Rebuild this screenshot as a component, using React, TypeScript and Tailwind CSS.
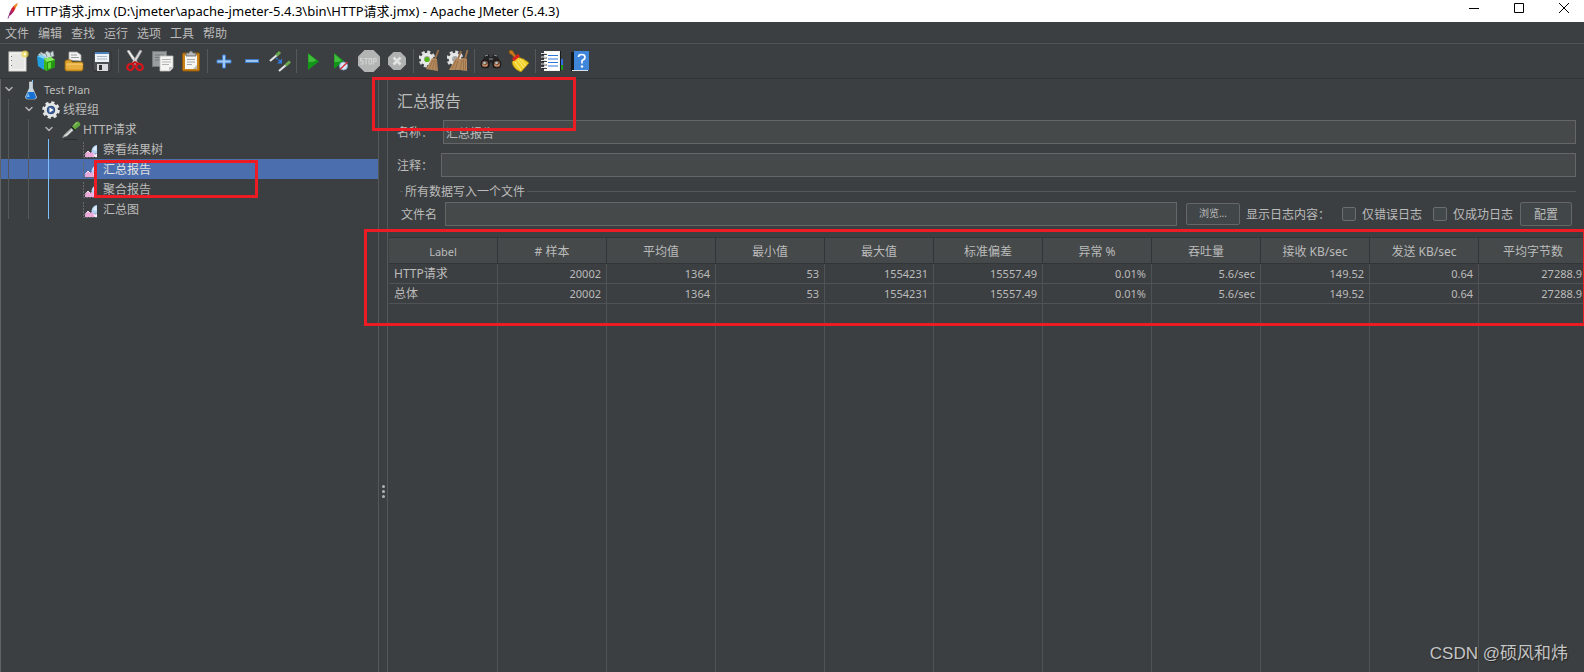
import type { ReactNode } from 'react'
import { ChevronDown } from 'lucide-react'
import { clsx } from 'clsx'

const MENUS = ['文件', '编辑', '查找', '运行', '选项', '工具', '帮助']

const COLUMNS = [
  'Label',
  '# 样本',
  '平均值',
  '最小值',
  '最大值',
  '标准偏差',
  '异常 %',
  '吞吐量',
  '接收 KB/sec',
  '发送 KB/sec',
  '平均字节数',
]

const ROWS = [
  ['HTTP请求', '20002', '1364', '53', '1554231', '15557.49', '0.01%', '5.6/sec', '149.52', '0.64', '27288.9'],
  ['总体', '20002', '1364', '53', '1554231', '15557.49', '0.01%', '5.6/sec', '149.52', '0.64', '27288.9'],
]

function Icon({ children, className }: { children: ReactNode; className?: string }) {
  return (
    <svg viewBox="0 0 22 22" className={clsx('size-[22px] shrink-0', className)} aria-hidden="true">
      {children}
    </svg>
  )
}

function FeatherIcon() {
  return (
    <svg viewBox="0 0 12 16" className="h-4 w-3 shrink-0" aria-hidden="true">
      <path d="M1 15.500 3 10" stroke="#8a3b8f" strokeWidth="1" />
      <path d="M2 13 Q2 9 5 5 L7 7 Q6 11 2 13" fill="#a3246e" />
      <path d="M4.500 6 Q6 3 8 2 L8.500 5 Q7.500 8 5.500 9.500Z" fill="#d3202c" />
      <path d="M7 3 Q9 0 11 0 Q10 3 8 6Z" fill="#f08a24" />
    </svg>
  )
}

function NewIcon() {
  return (
    <Icon>
      <rect x="2" y="2" width="17" height="19" fill="#f2f2f0" stroke="#d5d5d2" />
      <rect x="4" y="4" width="13" height="15" fill="#e6e6e5" />
      <path d="M4.500 6v1M4.500 10v1M4.500 15v1" stroke="#777" />
      <circle cx="18" cy="4" r="3.600" fill="#efd84a" opacity="0.75" />
      <circle cx="18" cy="4" r="1.500" fill="#fffbd0" />
    </Icon>
  )
}

function TemplatesIcon() {
  return (
    <Icon>
      <path d="M3 5 6 2l3 2 3-3 3 2 3-2 1 5-8 3Z" fill="#cfdadd" stroke="#7f9297" strokeWidth="0.7" />
      <path d="M5 3l3 4M10 2l2 5M15 2l1 4" stroke="#66777b" strokeWidth="0.8" />
      <path d="M2 6l7 2v12l-6-4Z" fill="#1f9fe0" />
      <path d="M2 6l5-1 4 2-2 2Z" fill="#7fd3fa" />
      <path d="M9 9l7-2 4 3v7l-9 4-2-2Z" fill="#3db81c" />
      <path d="M9 9l7-2 4 3-8 2Z" fill="#86e85c" />
      <path d="M12 12v9l8-4v-7Z" fill="#259611" />
      <path d="M13 13l3-1v6l-3 1Z" fill="#62d83d" />
    </Icon>
  )
}

function OpenIcon() {
  return (
    <Icon>
      <path d="M6 10V2h8l4 3v6Z" fill="#f4f4f4" stroke="#a9a9a9" strokeWidth="0.8" />
      <path d="M8 5h6M8 7.500h8" stroke="#999" />
      <path d="M2 12q0-2 2-2h4l1 2h10q1 0 1 2v5q0 2-2 2H4q-2 0-2-2Z" fill="#dda22c" stroke="#9b680d" strokeWidth="0.8" />
      <path d="M3 14h17l-1 5H4Z" fill="#e8b040" />
      <path d="M3.500 14h16" stroke="#ffdf8b" strokeWidth="0.8" />
    </Icon>
  )
}

function SaveIcon() {
  return (
    <Icon>
      <path d="M2 4q0-2 2-2h14q2 0 2 2v15q0 2-2 2H4q-2 0-2-2Z" fill="#4d5052" stroke="#2f3132" />
      <rect x="4" y="2" width="14" height="10" fill="#eef3f7" />
      <path d="M4 3h14" stroke="#4b84bd" strokeWidth="2" />
      <path d="M6 6.500h10M6 9h10" stroke="#a9b8c4" />
      <rect x="6" y="14" width="11" height="7" fill="#d9dbdc" />
      <rect x="8" y="15" width="3" height="5" fill="#303233" />
    </Icon>
  )
}

function CutIcon() {
  return (
    <Icon>
      <path d="M3 1 5 0l9 13-2 2Z" fill="#f1f1f1" stroke="#999" strokeWidth="0.6" />
      <path d="M18 1 16 0 8 13l2 2Z" fill="#d7d7d7" stroke="#999" strokeWidth="0.6" />
      <ellipse cx="6.500" cy="17" rx="3.400" ry="3" fill="none" stroke="#d9151c" strokeWidth="2.200" transform="rotate(-35 6.500 17)" />
      <ellipse cx="15.500" cy="17" rx="3.400" ry="3" fill="none" stroke="#d9151c" strokeWidth="2.200" transform="rotate(35 15.500 17)" />
      <path d="M8 14l3-2 3 2" fill="none" stroke="#c1080f" strokeWidth="1.800" />
    </Icon>
  )
}

function CopyIcon() {
  return (
    <Icon>
      <rect x="0.500" y="1.500" width="14" height="15" fill="#9a9d9e" stroke="#74787a" />
      <path d="M3 5h9M3 7.500h9M3 10h9" stroke="#777b7d" />
      <path d="M8 6h13v12l-3 3H8Z" fill="#f5f5f4" stroke="#bdbdbb" strokeWidth="0.8" />
      <path d="M10 9.500h9M10 12h9M10 14.500h7" stroke="#b4b4b4" />
      <path d="M21 17h-4v4Z" fill="#c2c2c0" />
    </Icon>
  )
}

function PasteIcon() {
  return (
    <Icon>
      <rect x="2.500" y="3" width="17" height="18" rx="1" fill="#c98217" stroke="#8d560a" />
      <path d="M5 5h12v14H5Z" fill="#f6f6f5" />
      <path d="M7 9.500h8M7 12h8M7 14.500h5" stroke="#a8a8a8" />
      <path d="M17 15l-4 4h4Z" fill="#b9b9b7" />
      <path d="M6 6V3h3q0-2 2-2t2 2h3v3Z" fill="#b5b7b8" stroke="#5e6061" strokeWidth="0.8" />
    </Icon>
  )
}

function PlusIcon() {
  return (
    <Icon>
      <path d="M9.500 5h3v5H18v3h-5.500v5h-3v-5H4v-3h5.500Z" fill="#9fcaf5" stroke="#3f7cc8" />
    </Icon>
  )
}

function MinusIcon() {
  return (
    <Icon>
      <rect x="4.500" y="9.500" width="13" height="3" fill="#9fc4ee" stroke="#3f7cc8" />
    </Icon>
  )
}

function ToggleIcon() {
  return (
    <Icon>
      <path d="M1 11 8 5" stroke="#dfe2e0" strokeWidth="2.200" />
      <path d="M7.500 5.500 11 2" stroke="#6cab4e" strokeWidth="3" />
      <path d="M10 21l7-6" stroke="#dfe2e0" strokeWidth="2.200" />
      <path d="M16.500 15.500 21 11.500" stroke="#6cab4e" strokeWidth="3" />
      <path d="M7 8l4 3" stroke="#2f7be0" strokeWidth="1.400" strokeDasharray="2 1" />
      <path d="M13 8.500v5h-5Z" fill="#2f7be0" />
    </Icon>
  )
}

function PlayIcon() {
  return (
    <Icon>
      <path d="M6 3v17l11-8.500Z" fill="#13951a" />
      <path d="M6.500 4v8q5 0 8-1.500Z" fill="#43bd3c" />
    </Icon>
  )
}

function PlayNoTimersIcon() {
  return (
    <Icon>
      <path d="M4 3v16l10-8Z" fill="#13951a" />
      <path d="M4.500 4v8q5 0 7-1.500Z" fill="#43bd3c" />
      <circle cx="13.500" cy="16" r="4" fill="#dbe8f4" stroke="#7ba6cf" />
      <path d="M10 19.500 17.500 12" stroke="#d3303b" strokeWidth="1.400" />
    </Icon>
  )
}

function StopIcon() {
  return (
    <Icon>
      <path d="M6.500 0h9L22 6.500v9L15.500 22h-9L0 15.500v-9Z" fill="#b3b4b4" />
      <path
        d="M5 8.500H2.500v2.500H5v3H2.300M6.200 8.500h3.600M8 8.500v6M11 8.500h2.500v5.500H11ZM15.500 14.500v-6H18v3h-2.500"
        fill="none"
        stroke="#d2d2d2"
        strokeWidth="1.200"
      />
    </Icon>
  )
}

function ShutdownIcon() {
  return (
    <Icon>
      <path d="M7.500 2h7L20 7.500v7L14.500 20h-7L2 14.500v-7Z" fill="#b0b1b1" />
      <path d="M7.500 7.500l7 7M14.500 7.500l-7 7" stroke="#e2e2e2" strokeWidth="2.600" />
    </Icon>
  )
}

function Gear() {
  return (
    <>
      <circle cx="8" cy="9" r="7" fill="none" stroke="#dcdedd" strokeWidth="3" strokeDasharray="3 2.500" />
      <circle cx="8" cy="9" r="6.300" fill="#e7e9e8" />
      <circle cx="8" cy="9" r="3" fill="#a7aaa9" />
    </>
  )
}

function ClearIcon() {
  return (
    <Icon>
      <Gear />
      <circle cx="8" cy="9.500" r="2.600" fill="#56b518" />
      <path d="M19.500 0 16 9" stroke="#9a7048" strokeWidth="1.800" />
      <path d="M13 8l5 1 1 12-12-2Z" fill="#b58a5e" />
      <path d="M14 10l-4 9M15.500 10l-2 10M17 10v10" stroke="#8a633c" strokeWidth="0.6" />
    </Icon>
  )
}

function ClearAllIcon() {
  return (
    <Icon>
      <Gear />
      <path d="M14 1l-3 8M20.500 0 18 9" stroke="#9a7048" strokeWidth="1.800" />
      <path d="M9 8l4 1 2-1 5 1 0 12-7-1-11 0Z" fill="#b58a5e" />
      <path d="M9 10l-4 9M11 11l-3 9M15 10l-2 10M16.500 10v10M18.500 10v10" stroke="#8a633c" strokeWidth="0.6" />
    </Icon>
  )
}

function SearchIcon() {
  return (
    <Icon>
      <path d="M1 13 5 5l4-1 1 3h2l1-3 4 1 4 8-1 4-7 1-1-5h-2l-1 5-7-1Z" fill="#242526" />
      <path d="M5 6l3-1M17 6l-3-1M9 9h4" stroke="#909394" />
      <circle cx="5" cy="14" r="4" fill="#6f5140" stroke="#111" />
      <circle cx="17" cy="14" r="4" fill="#6f5140" stroke="#111" />
      <path d="M2.500 14.500q2.500 3 5 0M14.500 14.500q2.500 3 5 0" fill="none" stroke="#dc9467" strokeWidth="1.200" />
      <circle cx="4.500" cy="13" r="1.300" fill="#b9c4c6" />
      <circle cx="16.500" cy="13" r="1.300" fill="#b9c4c6" />
    </Icon>
  )
}

function ResetIcon() {
  return (
    <Icon>
      <path d="M1 2q0-2 2-2t3 3l3 4-2 2-3-4q-3-1-3-3Z" fill="#c67a22" stroke="#7d4709" strokeWidth="0.7" />
      <path d="M9 7q7 1 12 6l-8 9q-8-3-9-10Z" fill="#f0cf29" stroke="#a1830b" strokeWidth="0.8" />
      <path d="M5 10l6-5" stroke="#d9231c" strokeWidth="3" />
      <path d="M7 12l6 8M10 10l6 8M12 9l6 7" stroke="#fdf08c" />
    </Icon>
  )
}

function FunctionHelperIcon() {
  return (
    <Icon>
      <rect x="18" y="9" width="4" height="6" fill="#2f6fe0" />
      <rect x="18" y="15" width="4" height="5" fill="#1f9a1a" />
      <rect x="3.500" y="1.500" width="15" height="19" fill="#fff" stroke="#f4f4f4" />
      <path d="M19.500 1v20" stroke="#17191a" />
      <path d="M7 5.500h10M7 9h10M7 12.500h10M7 16h10" stroke="#2d76d8" strokeWidth="1.200" />
      <path d="M1 4.500h5M1 8h5M1 11.500h5M1 15h5M1 18.500h5" stroke="#17191a" strokeWidth="0.8" />
      <path d="M0 3.500h5M0 7h5M0 10.500h5M0 14h5M0 17.500h5" stroke="#e0e0e0" strokeWidth="1.200" />
    </Icon>
  )
}

function HelpIcon() {
  return (
    <Icon>
      <path d="M2 2h5v19H2Z" fill="#15191e" />
      <rect x="5" y="1" width="15" height="19" fill="#3f85d9" />
      <path d="M3 20.500h16" stroke="#d6e2ee" />
      <path d="M9.500 7q0-2.500 3.200-2.500T16 7t-3 3.500v3" fill="none" stroke="#fff" strokeWidth="1.600" />
      <circle cx="13" cy="16.500" r="1.200" fill="#fff" />
    </Icon>
  )
}

function FlaskIcon() {
  return (
    <Icon>
      <path d="M9.500 3h3v6l4 9q0 2-2 2h-7q-2 0-2-2l4-9Z" fill="#c8d4dc" stroke="#dfe7ec" strokeWidth="0.6" />
      <path d="M8 13h6l2 5q0 2-2 2H8q-2 0-2-2Z" fill="#1671d2" />
      <path d="M8.500 14l-2 4h3Z" fill="#79bcf7" />
      <path d="M12.500 1v3" stroke="#84c5ee" />
    </Icon>
  )
}

function ThreadGroupIcon() {
  return (
    <Icon>
      <circle cx="11" cy="11" r="7.300" fill="none" stroke="#e4e6e5" strokeWidth="3" strokeDasharray="3.100 2.630" />
      <circle cx="11" cy="11" r="5.500" fill="#42659c" stroke="#e4e6e5" strokeWidth="3" />
      <circle cx="11" cy="11" r="3.800" fill="none" stroke="#23406f" strokeWidth="0.8" />
      <path d="M9.500 8.500v5l4-2.500Z" fill="#fff" />
    </Icon>
  )
}

function SamplerIcon() {
  return (
    <Icon>
      <path d="M4 20.500h13" stroke="#2b2d2f" />
      <path d="M2.500 18.500 5 15l6.500-6 2 2L7 17Z" fill="#dfe3e1" stroke="#8d9290" strokeWidth="0.7" />
      <path d="M5.500 15.500l6-5.500" stroke="#7d8480" strokeWidth="0.7" />
      <path d="M11 7.500l4 4" stroke="#1f2220" strokeWidth="1.500" />
      <path d="M12 7.500l4-4.500q2-1 3.500.5t.5 3l-5 4Z" fill="#62a83e" />
      <path d="M14 6.500l3-3" stroke="#b3dd95" />
    </Icon>
  )
}

function ListenerIcon() {
  return (
    <svg viewBox="0 0 16 18" className="h-[18px] w-4 shrink-0" aria-hidden="true">
      <path d="M0.500 1v15.500h15" fill="none" stroke="#65696c" strokeDasharray="2 1" />
      <path d="M2 16v-2l3-4 2 2 3-2 4 6Z" fill="#eea9dc" />
      <path d="M2 13.500l3-3.500 2 2" fill="none" stroke="#fbe0f3" />
      <path d="M8.500 9.500Q9.500 4.500 14 4v8.500q-5 1-5.500-3Z" fill="#b4d3f3" />
      <path d="M10 8.500q1-3 3.500-3.500v5Z" fill="#e2effb" />
      <path d="M10 13q2 1 4-.5V16h-2Z" fill="#f6f0f8" />
    </svg>
  )
}

const TOOLBAR = [
  [
    { label: '新建', icon: <NewIcon /> },
    { label: '模板', icon: <TemplatesIcon /> },
    { label: '打开', icon: <OpenIcon /> },
    { label: '保存', icon: <SaveIcon /> },
  ],
  [
    { label: '剪切', icon: <CutIcon /> },
    { label: '复制', icon: <CopyIcon /> },
    { label: '粘贴', icon: <PasteIcon /> },
  ],
  [
    { label: '展开', icon: <PlusIcon /> },
    { label: '折叠', icon: <MinusIcon /> },
    { label: '切换', icon: <ToggleIcon /> },
  ],
  [
    { label: '启动', icon: <PlayIcon /> },
    { label: '不停顿开始', icon: <PlayNoTimersIcon /> },
    { label: '停止', icon: <StopIcon /> },
    { label: '关闭', icon: <ShutdownIcon /> },
  ],
  [
    { label: '清除', icon: <ClearIcon /> },
    { label: '清除全部', icon: <ClearAllIcon /> },
  ],
  [
    { label: '查找', icon: <SearchIcon /> },
    { label: '重置查找', icon: <ResetIcon /> },
  ],
  [
    { label: '函数助手', icon: <FunctionHelperIcon /> },
    { label: '帮助', icon: <HelpIcon /> },
  ],
]

function TitleBar() {
  return (
    <header className="flex h-[22px] items-center bg-white pl-[7px] text-black">
      <FeatherIcon />
      <h1 className="ml-[7px] flex-1 truncate text-[13px] leading-4">
        HTTP请求.jmx (D:\jmeter\apache-jmeter-5.4.3\bin\HTTP请求.jmx) - Apache JMeter (5.4.3)
      </h1>
      <div className="-mr-[2px] flex h-4 self-start">
        <button aria-label="最小化" className="flex w-[45px] items-center justify-center">
          <svg viewBox="0 0 10 10" className="size-[10px]"><path d="M0 5.500h10" stroke="#000" /></svg>
        </button>
        <button aria-label="最大化" className="flex w-[45px] items-center justify-center">
          <svg viewBox="0 0 10 10" className="size-[10px]"><path d="M.5.500h9v9h-9Z" fill="none" stroke="#000" /></svg>
        </button>
        <button aria-label="关闭窗口" className="flex w-[45px] items-center justify-center">
          <svg viewBox="0 0 10 10" className="size-[10px]"><path d="M0 0l10 10M10 0 0 10" stroke="#000" /></svg>
        </button>
      </div>
    </header>
  )
}

interface TreeRowProps {
  children: ReactNode
  icon: ReactNode
  indent: string
  leaf?: boolean
  selected?: boolean
}

function TreeRow({ children, icon, indent, leaf, selected }: TreeRowProps) {
  return (
    <div className={clsx('flex h-5 items-center', indent, selected && 'bg-[#4b6eaf] text-[#e0e0e0]')}>
      {!leaf && (
        <button aria-label="折叠" className="mr-[5px] flex w-3 justify-center">
          <ChevronDown className="size-3 text-[#b0b2b3]" strokeWidth={3} />
        </button>
      )}
      <span className={clsx('flex items-center pt-[2px]', leaf ? 'gap-1' : 'gap-px')}>
        {icon}
        {children}
      </span>
    </div>
  )
}

function TestTree() {
  return (
    <nav className="relative w-[378px] shrink-0 border-l border-[#606264]">
      <TreeRow indent="pl-[2px]" icon={<FlaskIcon />}>
        <span className="ml-px text-[11px]">Test Plan</span>
      </TreeRow>
      <TreeRow indent="pl-[22px]" icon={<ThreadGroupIcon />}>线程组</TreeRow>
      <TreeRow indent="pl-[42px]" icon={<SamplerIcon />}>HTTP请求</TreeRow>
      <TreeRow indent="pl-[82px]" leaf icon={<ListenerIcon />}>察看结果树</TreeRow>
      <TreeRow indent="pl-[82px]" leaf selected icon={<ListenerIcon />}>汇总报告</TreeRow>
      <TreeRow indent="pl-[82px]" leaf icon={<ListenerIcon />}>聚合报告</TreeRow>
      <TreeRow indent="pl-[82px]" leaf icon={<ListenerIcon />}>汇总图</TreeRow>
      {/* indent guides */}
      <i className="absolute left-[7px] top-5 h-[120px] w-px bg-[#55585a]" />
      <i className="absolute left-[27px] top-10 h-[100px] w-px bg-[#55585a]" />
      <i className="absolute left-[47px] top-[60px] h-20 w-px bg-[#7cc0ff]" />
      {/* marker around the selected node */}
      <i className="pointer-events-none absolute left-[93px] top-[81px] h-[38px] w-[164px] border-3 border-[#ed1c24]" />
    </nav>
  )
}

const FIELD = 'h-6 min-w-0 flex-1 border border-[#646667] bg-[#45494a] px-[2px] pt-[2px] outline-none'
const CHECKBOX = 'mb-[2px] size-[14px] appearance-none rounded-xs border border-[#6b6d6e] bg-[#43494a]'

function ReportForm() {
  return (
    <form className="pl-[9px] pr-2 pt-[10px]" onSubmit={(e) => e.preventDefault()}>
      <h2 className="text-base leading-6">汇总报告</h2>
      <div className="mt-[7px] flex items-center">
        <label htmlFor="name" className="w-[46px] pt-[2px]">名称：</label>
        <input id="name" className={FIELD} defaultValue="汇总报告" />
      </div>
      <div className="mt-[9px] flex items-center">
        <label htmlFor="comment" className="w-11 pt-[2px]">注释：</label>
        <input id="comment" className={FIELD} />
      </div>
      <fieldset className="ml-[3px] mt-[5px] min-w-0 border-t border-[#55585a] pl-px pr-1 pt-[2px]">
        <legend className="ml-[2px] px-[2px] pt-[2px] leading-4">所有数据写入一个文件</legend>
        <div className="flex items-center">
          <label htmlFor="filename" className="mr-2 pt-[2px]">文件名</label>
          <input id="filename" className={FIELD} />
          <button className="ml-[9px] h-[22px] w-[54px] rounded-xs border border-[#646667] bg-[#414648] text-[10px]">
            浏览...
          </button>
          <span className="ml-[6px] pt-[2px]">显示日志内容：</span>
          <label className="ml-3 flex items-center gap-[6px] pt-[2px]">
            <input type="checkbox" className={CHECKBOX} />
            仅错误日志
          </label>
          <label className="ml-[11px] flex items-center gap-[6px] pt-[2px]">
            <input type="checkbox" className={CHECKBOX} />
            仅成功日志
          </label>
          <button className="ml-[7px] h-6 w-[52px] rounded-xs border border-[#646667] bg-[#414648] pt-[2px]">配置</button>
        </div>
      </fieldset>
    </form>
  )
}

function SummaryTable() {
  return (
    <table className="h-full w-full table-fixed border-separate border-spacing-0 text-[11px]">
      <colgroup>
        {COLUMNS.map((name) => (
          <col key={name} className="w-[109px]" />
        ))}
      </colgroup>
      <thead>
        <tr className="h-[27px] bg-[#45494a]">
          {COLUMNS.map((name) => (
            <th key={name} className="border-b border-r border-t border-[#323537] pt-[3px] font-normal">
              <span className={name === 'Label' ? 'text-[11px]' : 'text-xs'}>{name}</span>
            </th>
          ))}
        </tr>
      </thead>
      <tbody>
        {ROWS.map((row) => (
          <tr key={row[0]} className="h-5">
            {row.map((value, i) => (
              <td
                key={i}
                className={clsx(
                  'border-b border-r border-[#505355] px-[5px] leading-4',
                  i === 0 ? 'text-left text-xs' : 'text-right',
                )}
              >
                {value}
              </td>
            ))}
          </tr>
        ))}
        <tr>
          {COLUMNS.map((name) => (
            <td key={name} className="border-r border-[#505355]" />
          ))}
        </tr>
      </tbody>
    </table>
  )
}

export default function App() {
  return (
    <div className="relative flex h-screen flex-col overflow-hidden bg-[#3c3f41] font-['Noto_Sans','Noto_Sans_CJK_SC',sans-serif] text-xs text-[#bbbbbb]">
      <TitleBar />
      <nav className="flex h-[22px] items-center gap-[9px] border-b border-[#515355] pl-[5px] pt-[2px]">
        {MENUS.map((menu) => (
          <button key={menu}>{menu}</button>
        ))}
      </nav>
      <div className="flex h-[35px] items-center border-b border-[#323537] pl-1" role="toolbar">
        {TOOLBAR.map((group, i) => (
          <div key={i} className="flex items-center">
            {i > 0 && <span className="mx-[2px] h-6 w-px bg-[#55585a]" />}
            {group.map((item) => (
              <button key={item.label} aria-label={item.label} className="flex w-7 justify-center">
                {item.icon}
              </button>
            ))}
          </div>
        ))}
      </div>

      <main className="flex min-h-0 flex-1">
        <TestTree />
        <div className="flex w-[10px] shrink-0 flex-col items-center gap-[2px] border-x border-[#55585a] pt-[406px]">
          <span className="size-[3px] shrink-0 rounded-full bg-[#afb1b3]" />
          <span className="size-[3px] shrink-0 rounded-full bg-[#afb1b3]" />
          <span className="size-[3px] shrink-0 rounded-full bg-[#afb1b3]" />
        </div>
        <section className="relative flex min-w-0 flex-1 flex-col">
          <ReportForm />
          <div className="ml-px mt-[11px] min-h-0 flex-1">
            <SummaryTable />
          </div>
          {/* markers around the heading and the results */}
          <i className="pointer-events-none absolute -left-4 -top-[2px] h-[54px] w-[204px] border-3 border-[#ed1c24]" />
          <i className="pointer-events-none absolute -left-6 -right-[2px] top-[150px] h-[97px] border-3 border-[#ed1c24]" />
        </section>
      </main>

      <p className="pointer-events-none absolute bottom-[6px] right-4 font-['Liberation_Sans','Noto_Sans_CJK_SC',sans-serif] text-[17px] leading-6 text-[#c4c5c6] [text-shadow:1px_1px_1px_#222]">
        CSDN @硕风和炜
      </p>
    </div>
  )
}
